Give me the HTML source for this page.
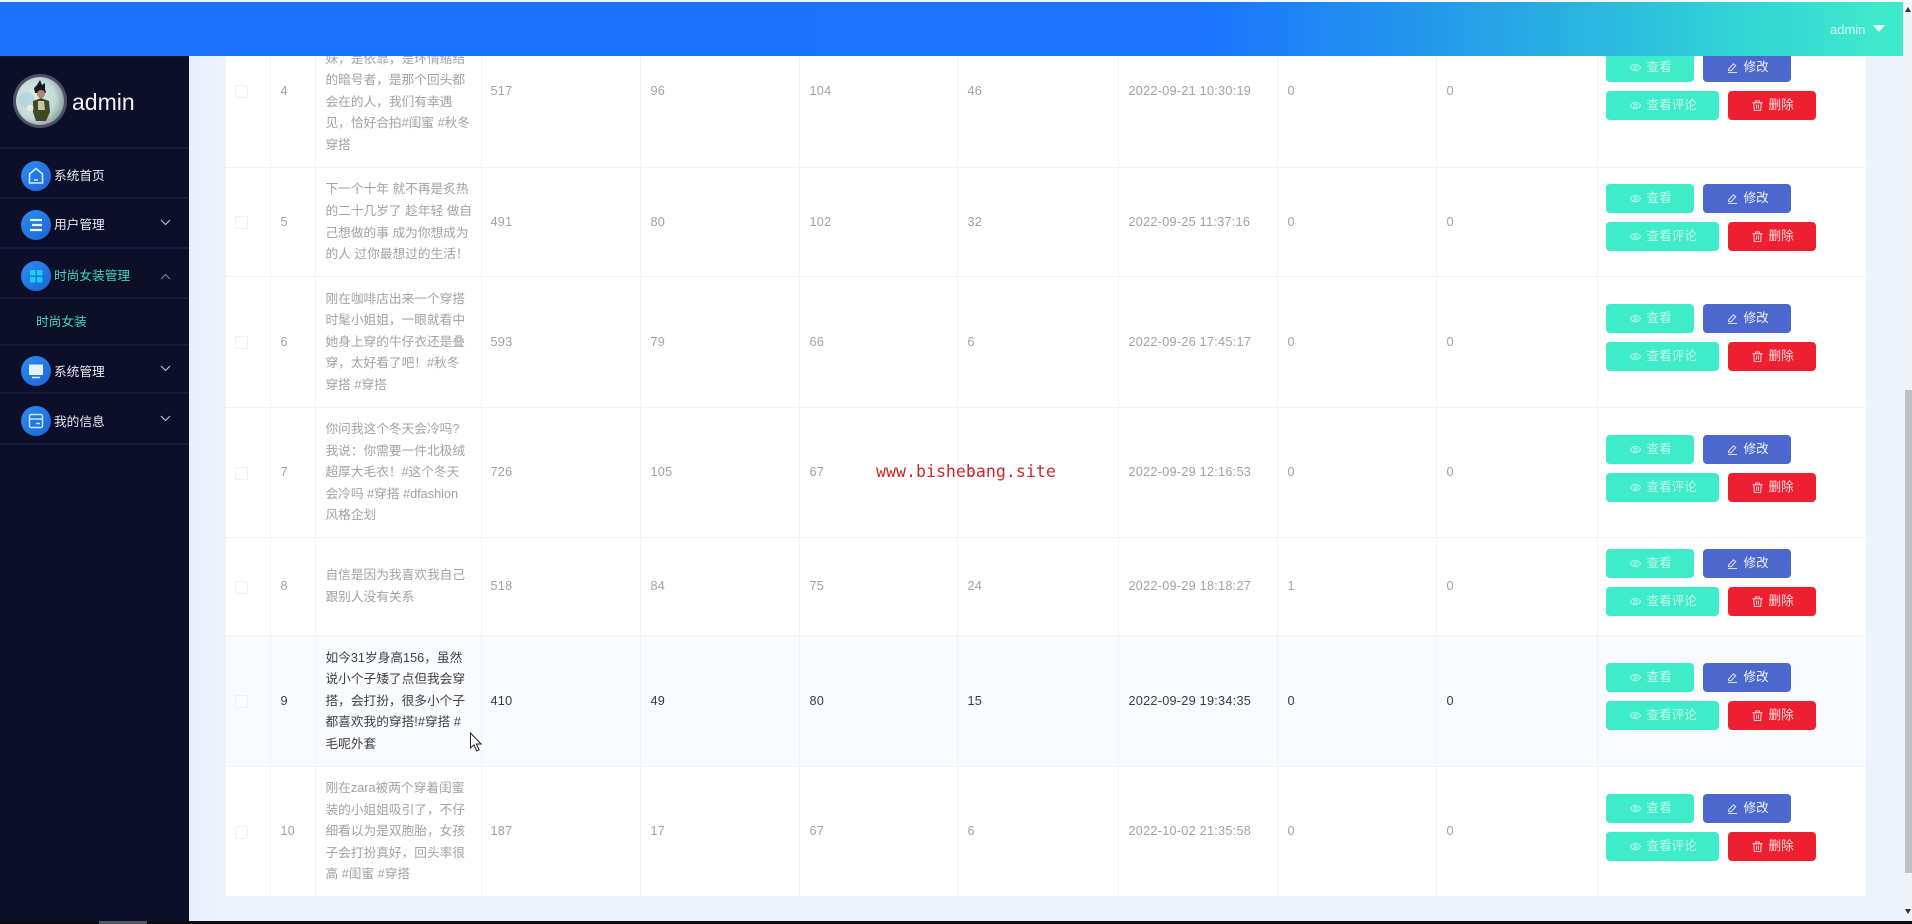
<!DOCTYPE html>
<html lang="zh"><head><meta charset="utf-8"><title>admin</title>
<style>
*{box-sizing:border-box}
html,body{margin:0;padding:0;width:1912px;height:924px;overflow:hidden;background:#eef2fa;font-family:"Liberation Sans","Noto Sans CJK SC",sans-serif}
#top{position:absolute;left:0;top:0;width:1912px;height:2px;background:#f4f8fb;z-index:9}
#hd{position:absolute;left:0;top:2px;width:1903px;height:54px;z-index:5;background:linear-gradient(90deg,#1b72fb 0,#1b74fb 1200px,#26a4e6 1500px,#30ccd8 1700px,#3eeacb 1880px)}
#hd span{position:absolute;left:1830px;top:20px;font-size:13px;line-height:15px;color:rgba(255,255,255,.78);filter:blur(.35px)}
#hd i{position:absolute;left:1873px;top:23px;width:0;height:0;border:6px solid transparent;border-top:7px solid #eafdfb;border-bottom:0}
#main{position:absolute;left:189px;top:2px;width:1714px;height:919px;background:linear-gradient(90deg,#e7effc 0,#edf2fb 37px,#eef2fa 100%)}
#side{position:absolute;left:0;top:56px;width:189px;height:865px;background:#0c0e2a;z-index:4;color:#e8e8ee}
#side .ln{position:absolute;left:0;width:189px;height:2px;background:#191c38}
#side .t{position:absolute;left:54px;font-size:12.7px;line-height:18px;white-space:nowrap;filter:blur(.35px)}
#side .g{color:#3fd8bd}
#side svg{position:absolute}
table{position:absolute;left:226px;top:15px;width:1640px;border-collapse:collapse;table-layout:fixed;background:#fff;color:#a2a2a6;font-size:12.7px;z-index:1;filter:blur(.35px)}
td{padding:2px 0 0 10px;border:1px solid #f1f3f7;border-top:0;border-left:0;vertical-align:middle;line-height:21.6px;white-space:nowrap;letter-spacing:.25px}
td.x{letter-spacing:0}
td:nth-child(4){padding-left:9px}
tr.h{background:#f9fbfe;color:#3c3c40}
tr.h td.x{color:#404044}
td.c{padding-left:9px}
td.c b{display:block;width:13px;height:13px;border:1px solid #eef0f3;border-radius:2px;background:#fff}
td:last-child{border-right:0}
.ops{position:relative;width:220px;height:67px;top:-5px;left:-2px}
.b{position:absolute;width:88px;height:29px;border-radius:4px;font-size:12.6px;line-height:29px;letter-spacing:0}
.b span{position:absolute;left:41px;top:0}
.b svg{position:absolute;left:24px;top:9px;width:11px;height:11px;fill:none;stroke:currentColor;stroke-width:2}
.v{background:#3eecc9;color:#c4f8ec;left:0;top:0}
.m{background:#4d68cc;color:#eef2fd;left:97px;top:0}
.p{background:#3eecc9;color:#c4f8ec;left:0;top:38px;width:113px}
.r{background:#ee1f31;color:#ffe0dc;left:122px;top:38px}
#wm{position:absolute;left:876px;top:462px;font-family:"DejaVu Sans Mono","Liberation Mono",monospace;font-size:16.6px;line-height:20px;color:#d3262b;z-index:3;white-space:nowrap;filter:blur(.3px)}
#cur{position:absolute;left:469px;top:732px;z-index:3}
#sb{position:absolute;left:1903px;top:0;width:9px;height:921px;background:#f1f2f4;z-index:6}
#sb i{position:absolute;left:2px;top:390px;width:7px;height:483px;background:#bfc2c5}
#sb u{position:absolute;left:2px;width:0;height:0;border:3.5px solid transparent}
#bot{position:absolute;left:0;top:921px;width:1912px;height:3px;background:#0b0b10;z-index:8}
#bot i{position:absolute;left:99px;top:0;width:48px;height:3px;background:#55565f}
</style></head><body>
<svg width="0" height="0" style="position:absolute"><defs>
<symbol id="e" viewBox="0 0 24 24"><path d="M1 12c3-5 7-7 11-7s8 2 11 7c-3 5-7 7-11 7s-8-2-11-7z"/><circle cx="12" cy="12" r="3.5"/></symbol>
<symbol id="w" viewBox="0 0 24 24"><path d="M3 16L14 4l5 4L9 19H4zM2 23h20"/></symbol>
<symbol id="d" viewBox="0 0 24 24"><path d="M1 6h22M8 6V2h8v4M4 6l1 17h14l1-17M10 10v9M14 10v9"/></symbol>
<linearGradient id="ci" x1="0" y1="0" x2="1" y2="1"><stop offset="0" stop-color="#2b8df0"/><stop offset="1" stop-color="#1c64d6"/></linearGradient>
<radialGradient id="av" cx=".4" cy=".45" r=".6"><stop offset="0" stop-color="#e4ece6"/><stop offset=".7" stop-color="#c4d8d8"/><stop offset="1" stop-color="#8fa4a8"/></radialGradient>
</defs></svg>
<div id="top"></div>
<div id="hd"><span>admin</span><i></i></div>
<div id="main"></div>

<div id="side">
<svg style="left:13px;top:18px" width="54" height="54" viewBox="0 0 54 54">
<circle cx="27" cy="27" r="27" fill="#4f5162"/><circle cx="27" cy="27" r="24" fill="url(#av)"/>
<circle cx="14" cy="26" r="8" fill="#a8d2da" opacity=".7"/>
<path d="M21 14l3-3 3-5 2 5 3-2 0 6 1 4H22z" fill="#15181e"/>
<ellipse cx="28" cy="20" rx="4" ry="4" fill="#a88a70"/>
<path d="M20 27l8-3 8 3 1 11-4 9H23l-3-9z" fill="#3e4a26"/><path d="M25 27h6l1 9h-7z" fill="#c6c8a0"/>
<circle cx="17" cy="34" r="3.500" fill="#e8e8e8"/>
</svg>
<div style="position:absolute;left:72px;top:30px;font-size:23px;line-height:32px;color:#f2f2f6;filter:blur(.3px)">admin</div>
<div class="ln" style="top:91px"></div>
<svg style="left:21px;top:105px" width="30" height="30" viewBox="0 0 30 30"><circle cx="15" cy="15" r="15" fill="url(#ci)"/><path d="M8.500 13L15 7.500l6.500 5.500v9h-13zM13 19h4" fill="none" stroke="#d5ecff" stroke-width="1.500"/></svg>
<div class="t" style="top:111px">系统首页</div>
<div class="ln" style="top:141px"></div>
<svg style="left:21px;top:154px" width="30" height="30" viewBox="0 0 30 30"><circle cx="15" cy="15" r="15" fill="url(#ci)"/><path d="M9 10h12M11 15h10M9 20h12" stroke="#eaf5ff" stroke-width="2.200"/></svg>
<div class="t" style="top:160px">用户管理</div>
<svg style="left:160px;top:163px" width="11" height="7" viewBox="0 0 11 7"><path d="M1 1l4.500 4.500L10 1" fill="none" stroke="#c8c8d4" stroke-width="1.100"/></svg>
<div class="ln" style="top:191px"></div>
<svg style="left:21px;top:205px" width="30" height="30" viewBox="0 0 30 30"><circle cx="15" cy="15" r="15" fill="url(#ci)"/><g fill="#1ad0ee"><rect x="9" y="9" width="5.500" height="5.500" rx="1"/><rect x="16" y="9" width="5.500" height="5.500" rx="1"/><rect x="9" y="16" width="5.500" height="5.500" rx="1"/><rect x="16" y="16" width="5.500" height="5.500" rx="1"/></g></svg>
<div class="t g" style="top:211px">时尚女装管理</div>
<svg style="left:160px;top:217px" width="11" height="7" viewBox="0 0 11 7"><path d="M1 6l4.500-4.500L10 6" fill="none" stroke="#7c8296" stroke-width="1.100"/></svg>
<div class="ln" style="top:241px"></div>
<div class="t g" style="left:36px;top:257px">时尚女装</div>
<div class="ln" style="top:288px"></div>
<svg style="left:21px;top:300px" width="30" height="30" viewBox="0 0 30 30"><circle cx="15" cy="15" r="15" fill="url(#ci)"/><rect x="8" y="8.500" width="14" height="10.500" fill="#e4f1ff"/><path d="M11 21.500h8" stroke="#e4f1ff" stroke-width="1.500"/></svg>
<div class="t" style="top:307px">系统管理</div>
<svg style="left:160px;top:309px" width="11" height="7" viewBox="0 0 11 7"><path d="M1 1l4.500 4.500L10 1" fill="none" stroke="#c8c8d4" stroke-width="1.100"/></svg>
<div class="ln" style="top:336px"></div>
<svg style="left:21px;top:350px" width="30" height="30" viewBox="0 0 30 30"><circle cx="15" cy="15" r="15" fill="url(#ci)"/><rect x="8.500" y="8.500" width="13" height="13" rx="1.500" fill="none" stroke="#cfe6ff" stroke-width="1.400"/><path d="M8.500 13h13M15 17.500h4" stroke="#cfe6ff" stroke-width="1.400"/></svg>
<div class="t" style="top:357px">我的信息</div>
<svg style="left:160px;top:359px" width="11" height="7" viewBox="0 0 11 7"><path d="M1 1l4.500 4.500L10 1" fill="none" stroke="#c8c8d4" stroke-width="1.100"/></svg>
<div class="ln" style="top:387px"></div>
</div>

<table>
<colgroup><col style="width:44px"><col style="width:45px"><col style="width:166px"><col style="width:159px"><col style="width:159px"><col style="width:158px"><col style="width:161px"><col style="width:159px"><col style="width:159px"><col style="width:161px"><col style="width:269px"></colgroup>
<tr style="height:152px"><td class="c"><b></b></td><td>4</td><td class="x">她是闺蜜，是姐妹<br>妹，是依靠，是环情缩结<br>的暗号者，是那个回头都<br>会在的人，我们有幸遇<br>见，恰好合拍#闺蜜 #秋冬<br>穿搭</td><td>517</td><td>96</td><td>104</td><td>46</td><td>2022-09-21 10:30:19</td><td>0</td><td>0</td><td><div class="ops"><div class="b v"><svg><use href="#e"/></svg><span>查看</span></div><div class="b m"><svg><use href="#w"/></svg><span>修改</span></div><div class="b p"><svg><use href="#e"/></svg><span>查看评论</span></div><div class="b r"><svg><use href="#d"/></svg><span>删除</span></div></div></td></tr>
<tr style="height:109px"><td class="c"><b></b></td><td>5</td><td class="x">下一个十年 就不再是炙热<br>的二十几岁了 趁年轻 做自<br>己想做的事 成为你想成为<br>的人 过你最想过的生活！</td><td>491</td><td>80</td><td>102</td><td>32</td><td>2022-09-25 11:37:16</td><td>0</td><td>0</td><td><div class="ops"><div class="b v"><svg><use href="#e"/></svg><span>查看</span></div><div class="b m"><svg><use href="#w"/></svg><span>修改</span></div><div class="b p"><svg><use href="#e"/></svg><span>查看评论</span></div><div class="b r"><svg><use href="#d"/></svg><span>删除</span></div></div></td></tr>
<tr style="height:131px"><td class="c"><b></b></td><td>6</td><td class="x">刚在咖啡店出来一个穿搭<br>时髦小姐姐，一眼就看中<br>她身上穿的牛仔衣还是叠<br>穿，太好看了吧！#秋冬<br>穿搭 #穿搭</td><td>593</td><td>79</td><td>66</td><td>6</td><td>2022-09-26 17:45:17</td><td>0</td><td>0</td><td><div class="ops"><div class="b v"><svg><use href="#e"/></svg><span>查看</span></div><div class="b m"><svg><use href="#w"/></svg><span>修改</span></div><div class="b p"><svg><use href="#e"/></svg><span>查看评论</span></div><div class="b r"><svg><use href="#d"/></svg><span>删除</span></div></div></td></tr>
<tr style="height:130px"><td class="c"><b></b></td><td>7</td><td class="x">你问我这个冬天会冷吗?<br>我说：你需要一件北极绒<br>超厚大毛衣！#这个冬天<br>会冷吗 #穿搭 #dfashion<br>风格企划</td><td>726</td><td>105</td><td>67</td><td>3</td><td>2022-09-29 12:16:53</td><td>0</td><td>0</td><td><div class="ops"><div class="b v"><svg><use href="#e"/></svg><span>查看</span></div><div class="b m"><svg><use href="#w"/></svg><span>修改</span></div><div class="b p"><svg><use href="#e"/></svg><span>查看评论</span></div><div class="b r"><svg><use href="#d"/></svg><span>删除</span></div></div></td></tr>
<tr style="height:98px"><td class="c"><b></b></td><td>8</td><td class="x">自信是因为我喜欢我自己<br>跟别人没有关系</td><td>518</td><td>84</td><td>75</td><td>24</td><td>2022-09-29 18:18:27</td><td>1</td><td>0</td><td><div class="ops"><div class="b v"><svg><use href="#e"/></svg><span>查看</span></div><div class="b m"><svg><use href="#w"/></svg><span>修改</span></div><div class="b p"><svg><use href="#e"/></svg><span>查看评论</span></div><div class="b r"><svg><use href="#d"/></svg><span>删除</span></div></div></td></tr>
<tr class="h" style="height:131px"><td class="c"><b></b></td><td>9</td><td class="x">如今31岁身高156，虽然<br>说小个子矮了点但我会穿<br>搭，会打扮，很多小个子<br>都喜欢我的穿搭!#穿搭 #<br>毛呢外套</td><td>410</td><td>49</td><td>80</td><td>15</td><td>2022-09-29 19:34:35</td><td>0</td><td>0</td><td><div class="ops"><div class="b v"><svg><use href="#e"/></svg><span>查看</span></div><div class="b m"><svg><use href="#w"/></svg><span>修改</span></div><div class="b p"><svg><use href="#e"/></svg><span>查看评论</span></div><div class="b r"><svg><use href="#d"/></svg><span>删除</span></div></div></td></tr>
<tr style="height:130px"><td class="c"><b></b></td><td>10</td><td class="x">刚在zara被两个穿着闺蜜<br>装的小姐姐吸引了，不仔<br>细看以为是双胞胎，女孩<br>子会打扮真好，回头率很<br>高 #闺蜜 #穿搭</td><td>187</td><td>17</td><td>67</td><td>6</td><td>2022-10-02 21:35:58</td><td>0</td><td>0</td><td><div class="ops"><div class="b v"><svg><use href="#e"/></svg><span>查看</span></div><div class="b m"><svg><use href="#w"/></svg><span>修改</span></div><div class="b p"><svg><use href="#e"/></svg><span>查看评论</span></div><div class="b r"><svg><use href="#d"/></svg><span>删除</span></div></div></td></tr>
</table>

<div id="wm">www.bishebang.site</div>
<svg id="cur" width="14" height="21" viewBox="0 0 14 21"><path d="M1.500 1v15l3.500-3.200 2.600 6 2.400-1-2.600-5.800h4.700z" fill="#fff" stroke="#222" stroke-width="1"/></svg>
<div id="sb"><u style="top:7px;border-top:0;border-bottom:5px solid #333"></u><i></i><u style="top:909px;border-bottom:0;border-top:5px solid #333"></u></div>
<div id="bot"><i></i></div>
</body></html>
